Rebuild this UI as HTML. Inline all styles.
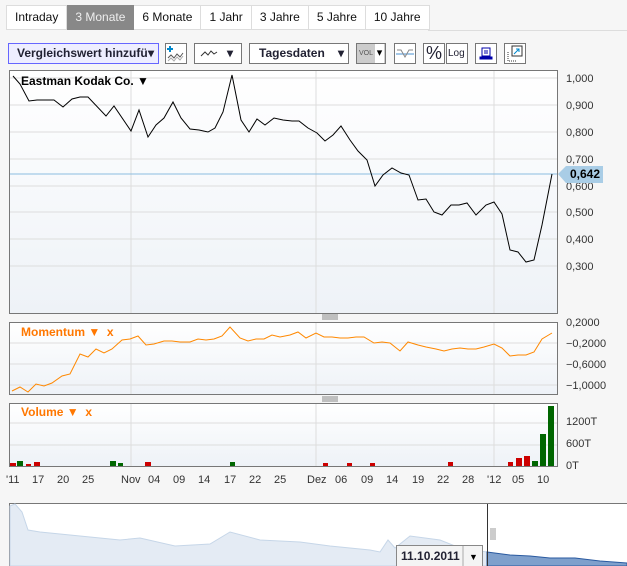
<!DOCTYPE html>
<html><head><meta charset="utf-8"><style>
body{margin:0;width:627px;height:566px;background:#f6f6f6;font-family:"Liberation Sans",sans-serif;overflow:hidden;position:relative}
.tabs{position:absolute;left:6px;top:5px;height:25px;display:flex}
.tabs div{border:1px solid #ddd;border-left:none;background:#fff;font-size:12px;line-height:22px;padding:0 8px;color:#111}
.tabs div:first-child{border-left:1px solid #ddd}
.tabs .on{background:#888;color:#eee;border-color:#888}
.line{position:absolute;left:428px;right:0;top:30px;border-top:1px solid #ddd}
.b{position:absolute;top:43px;height:21px;border:1px solid #777;background:#fff;box-sizing:border-box;font-size:12px;font-weight:bold;color:#223;line-height:19px;overflow:hidden;white-space:nowrap}
.ax{font-size:11px;fill:#333}
</style></head><body>
<div class="tabs"><div>Intraday</div><div class="on">3 Monate</div><div>6 Monate</div><div>1 Jahr</div><div>3 Jahre</div><div>5 Jahre</div><div>10 Jahre</div></div>
<div class="line"></div>
<div class="b" style="left:8px;width:151px;border-color:#66f;background:#eef;padding-left:8px"><span style="display:inline-block;width:131px;overflow:hidden;vertical-align:top">Vergleichswert hinzufügen</span><span style="position:absolute;right:4px;top:0">▾</span></div>
<div class="b" style="left:165px;width:22px"><svg width="20" height="19"><path d="M4 2V8M1 5H7" stroke="#08c" stroke-width="2"/><path d="M2 14L5 11 8 14 11 10 14 13 17 9" fill="none" stroke="#555"/><path d="M2 17L5 14 8 17 11 13 14 16 17 12" fill="none" stroke="#aaa"/></svg></div>
<div class="b" style="left:194px;width:48px"><svg width="24" height="19" style="position:absolute;left:4px;top:0"><path d="M2 12L6 8 9 11 12 7 15 10 18 8" fill="none" stroke="#333"/></svg><span style="position:absolute;left:32px;top:0">▾</span></div>
<div class="b" style="left:249px;width:100px;padding-left:9px">Tagesdaten<span style="position:absolute;right:4px;top:0">▾</span></div>
<div class="b" style="left:356px;width:30px;background:#ccc;font-size:7px;font-weight:normal;padding-left:2px;color:#555">VOL<span style="position:absolute;right:1px;top:0;font-size:11px;color:#000;background:#fff;width:9px;text-align:center">▾</span></div>
<div class="b" style="left:394px;width:22px"><svg width="20" height="19"><path d="M1 10H19" stroke="#4a90d0"/><path d="M2 6L6 6 10 13 14 6 18 6" fill="none" stroke="#888"/></svg></div>
<div class="b" style="left:423px;width:22px;font-size:18px;font-weight:normal;padding-left:2px">%</div>
<div class="b" style="left:446px;width:22px;font-size:10px;font-weight:normal;padding-left:1px">Log</div>
<div class="b" style="left:475px;width:22px"><svg width="20" height="19"><rect x="6" y="4" width="8" height="8" fill="none" stroke="#00a"/><path d="M8 7H12M8 9H12M4 13H16V15H4Z" stroke="#00a" fill="#00a"/></svg></div>
<div class="b" style="left:504px;width:22px"><svg width="20" height="19"><rect x="7" y="2" width="10" height="10" fill="none" stroke="#333"/><path d="M3 8V17H12" fill="none" stroke="#333" stroke-dasharray="1 1"/><path d="M9 10L14 5M11 5H14V8" fill="none" stroke="#08c"/></svg></div>
<svg width="627" height="566" style="position:absolute;left:0;top:0">
<defs><linearGradient id="g" x1="0" y1="0" x2="0" y2="1"><stop offset="0" stroke-color="#fff" stop-color="#fff"/><stop offset="1" stop-color="#eef2f7"/></linearGradient></defs>
<rect x="9.5" y="70.5" width="548" height="243" fill="url(#g)" stroke="#777"/>
<g stroke="#ddd"><path d="M10 78H557M10 105H557M10 132H557M10 159H557M10 186H557M10 212H557M10 239H557M10 266H557M131 71V313M316 71V313M494 71V313"/></g>
<path d="M10 174H557" stroke="#8bbde0"/>
<polyline fill="none" stroke="#000" points="13,76 20,84 29,101 37,100 54,100 63,107 72,99 80,97 88,97 106,116 114,106 131,131 139,110 148,137 156,125 164,118 173,102 181,118 190,129 199,130 208,132 215,128 223,112 232,75 241,120 249,132 257,119 265,125 274,118 283,120 292,121 299,121 308,128 317,133 325,141 333,135 341,126 350,140 358,151 367,160 375,186 383,175 392,168 401,173 409,175 418,200 426,199 434,212 442,215 451,205 459,205 467,203 476,215 486,205 494,202 502,214 510,250 518,252 526,262 534,260 542,225 552,174"/>
<text x="21" y="85" font-size="12" font-weight="bold">Eastman Kodak Co. ▼</text>
<g class="ax"><text x="566" y="82">1,000</text><text x="566" y="109">0,900</text><text x="566" y="136">0,800</text><text x="566" y="163">0,700</text><text x="566" y="190">0,600</text><text x="566" y="216">0,500</text><text x="566" y="243">0,400</text><text x="566" y="270">0,300</text></g>
<path d="M558 174L566 166H603V183H566Z" fill="#a9cde6"/><text x="570" y="178" font-size="12" font-weight="bold">0,642</text>
<rect x="9.5" y="322.5" width="548" height="72" fill="url(#g)" stroke="#777"/>
<g stroke="#ddd"><path d="M10 343H557M10 364H557M10 385H557M131 323V394M316 323V394M494 323V394"/></g>
<polyline fill="none" stroke="#f80" points="12,391 20,387 28,392 36,384 44,386 52,383 62,376 70,374 80,354 88,357 96,349 104,353 112,349 122,340 130,339 138,336 146,345 154,344 164,341 172,341 180,342 190,342 198,339 206,340 214,339 222,336 230,327 240,338 248,341 256,339 264,339 272,335 280,337 290,335 298,332 306,338 316,333 324,337 332,337 340,338 348,338 356,337 364,337 374,343 382,342 390,343 400,351 408,342 418,345 426,347 436,349 444,351 452,349 460,348 468,349 476,349 484,347 494,344 502,348 510,356 518,355 526,355 534,352 542,339 552,333"/>
<text x="21" y="336" font-size="12" font-weight="bold" fill="#f70">Momentum ▼ &nbsp;x</text>
<g class="ax"><text x="566" y="326">0,2000</text><text x="566" y="347">−0,2000</text><text x="566" y="368">−0,6000</text><text x="566" y="389">−1,0000</text></g>
<rect x="9.5" y="403.5" width="548" height="63" fill="url(#g)" stroke="#777"/>
<g stroke="#ddd"><path d="M10 423H557M10 445H557M131 404V466M316 404V466M494 404V466"/></g>
<g fill="#c00"><rect x="10" y="463" width="6" height="3"/><rect x="26" y="464" width="5" height="2"/><rect x="34" y="462" width="6" height="4"/><rect x="145" y="462" width="6" height="4"/><rect x="323" y="463" width="5" height="3"/><rect x="347" y="463" width="5" height="3"/><rect x="370" y="463" width="5" height="3"/><rect x="448" y="462" width="5" height="4"/><rect x="508" y="462" width="5" height="4"/><rect x="516" y="458" width="6" height="8"/><rect x="524" y="456" width="6" height="10"/></g>
<g fill="#060"><rect x="17" y="461" width="6" height="5"/><rect x="110" y="461" width="6" height="5"/><rect x="118" y="463" width="5" height="3"/><rect x="230" y="462" width="5" height="4"/><rect x="532" y="461" width="6" height="5"/><rect x="540" y="434" width="6" height="32"/><rect x="548" y="406" width="6" height="60"/></g>
<text x="21" y="416" font-size="12" font-weight="bold" fill="#f70">Volume ▼ &nbsp;x</text>
<g class="ax"><text x="566" y="425">1200T</text><text x="566" y="447">600T</text><text x="566" y="469">0T</text></g>
<g stroke="#888"><path d="M322 315H338M322 317H338M322 319H338M322 397H338M322 399H338M322 401H338"/></g>
<g class="ax"><text x="6" y="483">'11</text><text x="32" y="483">17</text><text x="57" y="483">20</text><text x="82" y="483">25</text><text x="121" y="483">Nov</text><text x="148" y="483">04</text><text x="173" y="483">09</text><text x="198" y="483">14</text><text x="224" y="483">17</text><text x="249" y="483">22</text><text x="274" y="483">25</text><text x="307" y="483">Dez</text><text x="335" y="483">06</text><text x="361" y="483">09</text><text x="386" y="483">14</text><text x="412" y="483">19</text><text x="437" y="483">22</text><text x="462" y="483">28</text><text x="487" y="483">'12</text><text x="512" y="483">05</text><text x="537" y="483">10</text></g>
<rect x="9.5" y="503.5" width="630" height="70" fill="#fff" stroke="#777"/>
<path d="M10 506L15 504 22 512 28 530 40 532 80 536 120 540 140 538 175 546 210 544 230 532 260 540 300 542 330 546 370 550 380 552 388 540 395 548 410 536 440 540 460 548 487 552V566H10Z" fill="#e4ebf4" stroke="#c6d6e8"/>
<path d="M487 552L510 555 530 556 550 558 575 558 600 561 627 563V566H487Z" fill="#7fa0cc" stroke="#2a5aa0"/>
<path d="M487.5 504V566" stroke="#333"/>
<path d="M491 528V540M493 528V540M495 528V540" stroke="#999"/>
<rect x="396.5" y="545.5" width="86" height="22" fill="#f4f4f4" stroke="#888"/>
<path d="M463 546V566" stroke="#aaa"/>
<text x="401" y="560" font-size="12" font-weight="bold" fill="#223">11.10.2011</text>
<text x="469" y="560" font-size="9">▼</text>
</svg>
</body></html>
